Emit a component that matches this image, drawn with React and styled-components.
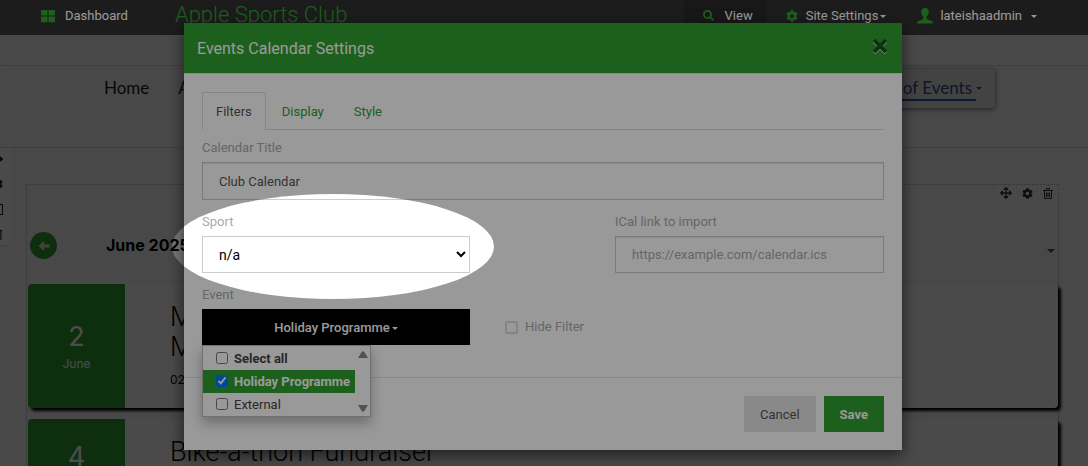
import { useState } from "react";
import styled, { createGlobalStyle } from "styled-components";
import {
  FaArrowsAlt,
  FaCog,
  FaRegTrashAlt,
  FaSearch,
  FaThLarge,
} from "react-icons/fa";

const GlobalStyle = createGlobalStyle`
  :root {
    --green: #319f31;
    --pageColor: #f2f2f2;
    --textColor: #555555;
    --labelColor: #aaaaaa;
    --borderColor: #cccccc;
  }
  * {
    box-sizing: border-box;
  }
  body {
    margin: 0;
    font-family: Roboto, "Liberation Sans", sans-serif;
    font-size: 13px;
    line-height: 18px;
    color: var(--textColor);
    background-color: var(--pageColor);
  }
  button,
  input,
  select {
    font-family: inherit;
    font-size: 13px;
  }
`;

const StyledShell = styled.div`
  position: relative;
  height: 100vh;
  overflow: hidden;
`;

/* ---- top bar ---- */
const StyledTopBar = styled.header`
  position: relative;
  z-index: 2;
  display: flex;
  align-items: center;
  height: 35px;
  padding: 0 51px 4px 41px;
  background-color: #2f2f2f;
`;
const StyledBarLink = styled.a`
  display: flex;
  align-items: center;
  gap: ${({ $gap }) => $gap || "10px"};
  height: 35px;
  padding: ${({ $padding }) => $padding || "0"};
  color: #ffffff;
  text-decoration: none;
  background-color: ${({ $active }) => ($active ? "#282828" : "transparent")};
  svg {
    color: var(--green);
  }
`;
const StyledSiteName = styled.span`
  margin-left: 47px;
  padding-bottom: 2px;
  font-size: 22px;
  line-height: 28px;
  font-weight: 300;
  color: var(--green);
`;
const StyledBarRight = styled.nav`
  display: flex;
  align-items: center;
  margin-left: auto;
`;
const StyledCaret = styled.span`
  display: inline-block;
  border: ${({ $size }) => $size || "3px"} solid transparent;
  border-top-color: currentColor;
  border-bottom: 0;
  margin-left: ${({ $space }) => $space || "2px"};
  vertical-align: middle;
`;

/* ---- page behind the dialog ---- */
const StyledBanner = styled.div`
  height: 31px;
  border-bottom: 1px dotted #bbbbbb;
`;
const StyledSiteNav = styled.nav`
  display: flex;
  align-items: flex-start;
  height: 82px;
  padding: 3px 93px 0 104px;
  gap: 29px;
  border-bottom: 1px dotted #bbbbbb;
`;
const StyledNavLink = styled.a`
  padding: 7px 0;
  font-family: Lato, sans-serif;
  font-size: 17px;
  line-height: 23px;
  color: #141a26;
  text-decoration: none;
`;
const StyledNavCurrent = styled(StyledNavLink)`
  display: flex;
  align-items: center;
  margin-left: auto;
  padding: 7px 13px 7px 32px;
  color: #2d4c96;
  background-color: #e0e0e0;
  border-radius: 4px;
  box-shadow: 0 1px 5px rgba(0, 0, 0, 0.6);
`;
const StyledUnderlined = styled.span`
  margin-right: -6px;
  padding: 0 4px 0 16px;
  border-bottom: 2px solid #1b5aa8;
`;
const StyledContent = styled.main`
  display: flex;
  align-items: flex-start;
  gap: 16px;
  padding-right: 29px;
`;
const StyledSideTools = styled.aside`
  display: flex;
  flex-direction: column;
  align-items: flex-end;
  gap: 13px;
  width: 10px;
  height: 98px;
  padding: 5px 7px 0 0;
  overflow: hidden;
  color: #222222;
  background-color: #f8f8f8;
  border-bottom: 1px dotted #bbbbbb;
  svg {
    flex-shrink: 0;
  }
`;
const StyledCalendar = styled.section`
  flex: 1;
  margin-top: 36px;
  padding-left: 1px;
  border: 1px dotted #aaaaaa;
`;
const StyledTools = styled.div`
  display: flex;
  justify-content: flex-end;
  gap: 1px;
`;
const StyledToolButton = styled.button`
  display: flex;
  align-items: center;
  justify-content: center;
  width: 20px;
  height: 16px;
  padding: 0;
  border: none;
  color: #333333;
  background-color: #f6f6f6;
`;
const StyledMonthBar = styled.div`
  display: flex;
  align-items: center;
  padding: 31px 3px 25px 2px;
  gap: 49px;
`;
const StyledRoundButton = styled.button`
  display: flex;
  align-items: center;
  justify-content: center;
  width: 27px;
  height: 27px;
  padding: 0;
  border: none;
  border-radius: 50%;
  color: #d4dcd4;
  background-color: var(--green);
`;
const StyledMonth = styled.h2`
  flex: 1;
  margin: 0;
  font-family: Inter, sans-serif;
  font-size: 16px;
  line-height: 27px;
  font-weight: 700;
  color: #000000;
`;
const StyledMonthCaret = styled(StyledCaret)`
  align-self: flex-end;
  margin-bottom: 6px;
`;
const StyledCard = styled.article`
  display: flex;
  margin-bottom: 11px;
  background-color: #f8f8f8;
  border-radius: 4px;
  box-shadow: 3px 3px 3px #000000;
  overflow: hidden;
`;
const StyledDate = styled.div`
  display: flex;
  flex-direction: column;
  align-items: center;
  justify-content: center;
  width: 97px;
  font-family: Inter, sans-serif;
  font-size: 12px;
  color: #ffffff;
  background-color: var(--green);
`;
const StyledDay = styled.span`
  font-size: 27px;
  line-height: 36px;
`;
const StyledCardText = styled.div`
  flex: 1;
  padding: 18px 45px 19px;
  font-family: Inter, sans-serif;
  font-size: 12px;
  color: #000000;
`;
const StyledCardTitle = styled.h3`
  margin: 0 0 9px;
  font-family: Roboto, sans-serif;
  font-size: 27px;
  line-height: 30px;
  font-weight: 300;
`;

/* ---- dialog ---- */
const StyledBackdrop = styled.div`
  position: absolute;
  inset: 0;
  z-index: 1;
  background-color: rgba(0, 0, 0, 0.5);
`;
const StyledDialogLayer = styled.div`
  position: absolute;
  inset: 0;
  z-index: 3;
  display: flex;
  align-items: flex-start;
  justify-content: center;
  padding: 23px 32px 16px 30px;
`;
const StyledDialog = styled.div`
  width: 100%;
  max-width: 718px;
  background-color: #ffffff;
  box-shadow: 0 5px 15px rgba(0, 0, 0, 0.6);
`;
const StyledDialogHeader = styled.div`
  display: flex;
  align-items: center;
  justify-content: space-between;
  height: 51px;
  padding: 2px 14px 0 13px;
  background-color: var(--green);
  border-bottom: 1px solid #e5e5e5;
`;
const StyledDialogTitle = styled.h1`
  margin: 0;
  font-size: 16px;
  line-height: 24px;
  font-weight: 400;
  color: #ffffff;
`;
const StyledClose = styled.button`
  display: flex;
  padding: 0 0 6px;
  border: none;
  color: #185018;
  background-color: transparent;
  cursor: pointer;
  svg {
    filter: drop-shadow(0 1px 0 rgba(255, 255, 255, 0.7));
  }
`;
const StyledDialogBody = styled.div`
  padding: 18px 18px 32px;
`;
const StyledTabs = styled.div`
  display: flex;
  gap: 2px;
  margin-bottom: 9px;
  border-bottom: 1px solid #dddddd;
`;
const StyledTab = styled.button`
  height: 38px;
  margin-bottom: -1px;
  padding: 0 13px;
  border: 1px solid ${({ $active }) => ($active ? "#dddddd" : "transparent")};
  border-bottom-color: ${({ $active }) => ($active ? "#ffffff" : "transparent")};
  color: ${({ $active }) => ($active ? "var(--textColor)" : "var(--green)")};
  background-color: transparent;
  cursor: pointer;
`;
const StyledFields = styled.div`
  display: grid;
  grid-template-columns: 268px 1fr 269px;
  row-gap: 13px;
`;
const StyledField = styled.div`
  display: flex;
  flex-direction: column;
  gap: 5px;
  grid-column: ${({ $column }) => $column || "auto"};
`;
const StyledLabel = styled.label`
  color: var(--labelColor);
`;
const StyledInput = styled.input`
  width: 100%;
  height: ${({ $tall }) => ($tall ? "38px" : "37px")};
  padding: 0 16px;
  border: 1px solid var(--borderColor);
  color: var(--textColor);
  background-color: #ffffff;
  box-shadow: inset 0 1px 1px rgba(0, 0, 0, 0.08);
  &::placeholder {
    color: var(--labelColor);
    opacity: 1;
  }
`;
const StyledSelect = styled.select`
  width: 100%;
  height: 37px;
  padding: 0 0 0 12px;
  border: 1px solid var(--borderColor);
  border-radius: 0;
  font-size: 14px;
  color: #000000;
  background-color: #ffffff;
`;
const StyledDropdown = styled.div`
  position: relative;
`;
const StyledDropdownButton = styled.button`
  display: block;
  width: 100%;
  height: 36px;
  border: none;
  color: #ffffff;
  background-color: #000000;
  font-weight: 500;
  cursor: pointer;
`;
const StyledMenu = styled.div`
  position: absolute;
  top: 100%;
  left: 0;
  display: flex;
  width: 169px;
  padding-top: 1px;
  border: 1px solid #bbbbbb;
  background-color: #ffffff;
  box-shadow: 0 6px 12px rgba(0, 0, 0, 0.3);
`;
const StyledOptions = styled.div`
  flex: 1;
`;
const StyledOption = styled.label`
  display: flex;
  align-items: center;
  gap: 6px;
  height: 23px;
  padding-left: 13px;
  font-weight: ${({ $bold }) => ($bold ? 700 : 400)};
  color: ${({ $selected }) => ($selected ? "#ffffff" : "#444444")};
  background-color: ${({ $selected }) =>
    $selected ? "var(--green)" : "transparent"};
  input {
    width: 12px;
    height: 12px;
    margin: 0 0 2px;
  }
`;
const StyledScroll = styled.div`
  display: flex;
  flex-direction: column;
  justify-content: space-between;
  align-items: center;
  width: 15px;
  padding: 4px 0;
  color: #888888;
`;
const StyledCheckLabel = styled.label`
  display: flex;
  align-items: center;
  gap: 7px;
  grid-column: 2 / 4;
  align-self: end;
  height: 36px;
  padding-left: 35px;
  color: var(--labelColor);
`;
const StyledCheckbox = styled.input`
  appearance: none;
  width: 13px;
  height: 13px;
  margin: 0;
  border: 2px solid #dddddd;
  border-radius: 2px;
  &:checked {
    background-color: var(--green);
  }
`;
const StyledDialogFooter = styled.div`
  display: flex;
  justify-content: flex-end;
  gap: 8px;
  padding: 18px;
  border-top: 1px solid #e5e5e5;
`;
const StyledButton = styled.button`
  height: 36px;
  padding: 0 16px;
  border: none;
  color: ${({ $primary }) => ($primary ? "#ffffff" : "var(--textColor)")};
  background-color: ${({ $primary }) =>
    $primary ? "var(--green)" : "#e5e5e5"};
  font-weight: ${({ $primary }) => ($primary ? 700 : 400)};
  cursor: pointer;
`;

/* dims everything except the ellipse round the Sport field */
const StyledSpotlight = styled.div`
  position: absolute;
  z-index: 4;
  top: 194px;
  left: calc(50% - 372px);
  width: 322px;
  height: 105px;
  border-radius: 50%;
  box-shadow: 0 0 0 2000px rgba(0, 0, 0, 0.4);
  pointer-events: none;
`;

function UserIcon() {
  return (
    <svg width="16" height="16" viewBox="0 0 16 16" fill="currentColor">
      <path d="M8 0C5.600 0 4.200 1.500 4.200 3.800c0 2 .9 3.900 2.200 5v1.500c0 .6-.4 1-.9 1.200L1.500 13C.5 13.400 0 13.900 0 14.800V15.500h16v-.7c0-.9-.5-1.400-1.500-1.800l-4-1.500c-.5-.2-.9-.6-.9-1.200V8.800c1.300-1.100 2.200-3 2.200-5C11.800 1.500 10.400 0 8 0z" />
    </svg>
  );
}

function CloseIcon() {
  return (
    <svg width="16" height="16" viewBox="0 0 16 16" stroke="currentColor">
      <path d="M2 2l12 12M14 2l-12 12" strokeWidth="3.800" />
    </svg>
  );
}

function BackIcon() {
  return (
    <svg width="12" height="12" viewBox="0 0 12 12" fill="currentColor">
      <path d="M.5 6L6 1v3.500h5.500v3H6V11z" />
    </svg>
  );
}

function PanelIcon() {
  return (
    <svg width="12" height="12" viewBox="0 0 12 12" stroke="currentColor">
      <rect x="1.500" y="1.500" width="10" height="10" fill="none" />
    </svg>
  );
}

function TrashIcon() {
  return (
    <svg
      width="10"
      height="11"
      viewBox="0 0 10 11"
      fill="none"
      stroke="currentColor"
    >
      <path d="M0 2.500h10M3.500 2V.5h3V2M1.500 3v7.500h7V3M3.500 4.500v4.500M5 4.500v4.500M6.500 4.500v4.500" />
    </svg>
  );
}

function ScrollArrow({ down }) {
  return (
    <svg width="10" height="8" viewBox="0 0 10 8" fill="currentColor">
      <path d={down ? "M0 1h10L6 7.500H4z" : "M0 7h10L6 .5H4z"} />
    </svg>
  );
}

const tabs = ["Filters", "Display", "Style"];

export default function App() {
  const [activeTab, setActiveTab] = useState("Filters");
  const [options, setOptions] = useState([
    { name: "Select all", bold: true, checked: false },
    { name: "Holiday Programme", bold: true, checked: true },
    { name: "External", bold: false, checked: false },
  ]);

  function handleToggle(name) {
    setOptions(
      options.map((option) =>
        option.name === name ? { ...option, checked: !option.checked } : option
      )
    );
  }

  return (
    <StyledShell>
      <GlobalStyle />
      <StyledTopBar>
        <StyledBarLink href="#">
          <FaThLarge size={14} />
          Dashboard
        </StyledBarLink>
        <StyledSiteName>Apple Sports Club</StyledSiteName>
        <StyledBarRight>
          <StyledBarLink href="#" $active $gap="11px" $padding="0 13px 0 19px">
            <FaSearch size={11} />
            View
          </StyledBarLink>
          <StyledBarLink href="#" $gap="8px" $padding="0 31px 0 20px">
            <FaCog size={12} />
            <span>
              Site Settings
              <StyledCaret />
            </span>
          </StyledBarLink>
          <StyledBarLink href="#" $gap="7px">
            <UserIcon />
            <span>
              lateishaadmin
              <StyledCaret $space="9px" />
            </span>
          </StyledBarLink>
        </StyledBarRight>
      </StyledTopBar>

      <StyledBanner />
      <StyledSiteNav>
        <StyledNavLink href="#">Home</StyledNavLink>
        <StyledNavLink href="#">A</StyledNavLink>
        <StyledNavCurrent href="#">
          <StyledUnderlined>of Events</StyledUnderlined>
          <StyledCaret $space="6px" />
        </StyledNavCurrent>
      </StyledSiteNav>
      <StyledContent>
        <StyledSideTools>
          <FaArrowsAlt size={12} />
          <FaCog size={12} />
          <PanelIcon />
          <FaRegTrashAlt size={12} />
        </StyledSideTools>
        <StyledCalendar>
          <StyledTools>
            <StyledToolButton type="button" aria-label="Move">
              <FaArrowsAlt size={12} />
            </StyledToolButton>
            <StyledToolButton type="button" aria-label="Settings">
              <FaCog size={11} />
            </StyledToolButton>
            <StyledToolButton type="button" aria-label="Delete">
              <TrashIcon />
            </StyledToolButton>
          </StyledTools>
          <StyledMonthBar>
            <StyledRoundButton type="button" aria-label="Previous month">
              <BackIcon />
            </StyledRoundButton>
            <StyledMonth>June 2025</StyledMonth>
            <StyledMonthCaret $size="4px" />
          </StyledMonthBar>
          <StyledCard>
            <StyledDate>
              <StyledDay>2</StyledDay>
              June
            </StyledDate>
            <StyledCardText>
              <StyledCardTitle>
                M<br />M
              </StyledCardTitle>
              02
            </StyledCardText>
          </StyledCard>
          <StyledCard>
            <StyledDate>
              <StyledDay>4</StyledDay>
            </StyledDate>
            <StyledCardText>
              <StyledCardTitle>Bike-a-thon Fundraiser</StyledCardTitle>
            </StyledCardText>
          </StyledCard>
        </StyledCalendar>
      </StyledContent>

      <StyledBackdrop />
      <StyledDialogLayer>
        <StyledDialog role="dialog" aria-labelledby="dialog-title">
          <StyledDialogHeader>
            <StyledDialogTitle id="dialog-title">
              Events Calendar Settings
            </StyledDialogTitle>
            <StyledClose type="button" aria-label="Close">
              <CloseIcon />
            </StyledClose>
          </StyledDialogHeader>
          <StyledDialogBody>
            <StyledTabs role="tablist">
              {tabs.map((tab) => (
                <StyledTab
                  key={tab}
                  type="button"
                  role="tab"
                  aria-selected={tab === activeTab}
                  $active={tab === activeTab}
                  onClick={() => setActiveTab(tab)}
                >
                  {tab}
                </StyledTab>
              ))}
            </StyledTabs>
            <StyledFields>
              <StyledField $column="1 / 4">
                <StyledLabel htmlFor="title">Calendar Title</StyledLabel>
                <StyledInput id="title" $tall defaultValue="Club Calendar" />
              </StyledField>
              <StyledField $column="1">
                <StyledLabel htmlFor="sport">Sport</StyledLabel>
                <StyledSelect id="sport">
                  <option>n/a</option>
                </StyledSelect>
              </StyledField>
              <StyledField $column="3">
                <StyledLabel htmlFor="ical">ICal link to import</StyledLabel>
                <StyledInput
                  id="ical"
                  placeholder="https://example.com/calendar.ics"
                />
              </StyledField>
              <StyledField $column="1">
                <StyledLabel htmlFor="event">Event</StyledLabel>
                <StyledDropdown>
                  <StyledDropdownButton id="event" type="button">
                    Holiday Programme
                    <StyledCaret />
                  </StyledDropdownButton>
                  <StyledMenu>
                    <StyledOptions>
                      {options.map(({ name, bold, checked }) => (
                        <StyledOption key={name} $bold={bold} $selected={checked}>
                          <input
                            type="checkbox"
                            checked={checked}
                            onChange={() => handleToggle(name)}
                          />
                          {name}
                        </StyledOption>
                      ))}
                    </StyledOptions>
                    <StyledScroll>
                      <ScrollArrow />
                      <ScrollArrow down />
                    </StyledScroll>
                  </StyledMenu>
                </StyledDropdown>
              </StyledField>
              <StyledCheckLabel>
                <StyledCheckbox type="checkbox" />
                Hide Filter
              </StyledCheckLabel>
            </StyledFields>
          </StyledDialogBody>
          <StyledDialogFooter>
            <StyledButton type="button">Cancel</StyledButton>
            <StyledButton type="button" $primary>
              Save
            </StyledButton>
          </StyledDialogFooter>
        </StyledDialog>
      </StyledDialogLayer>
      <StyledSpotlight />
    </StyledShell>
  );
}
